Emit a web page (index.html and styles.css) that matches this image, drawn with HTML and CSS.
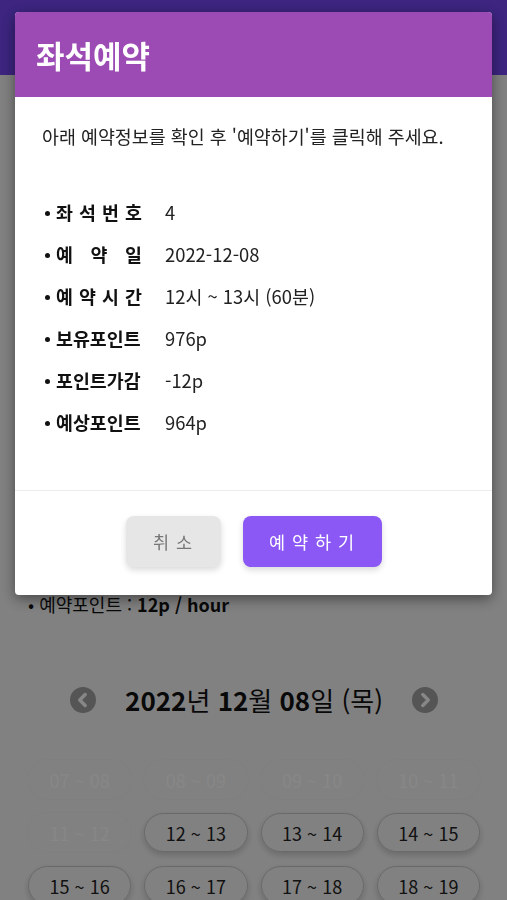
FILE: index.html
```html
<!DOCTYPE html>
<html lang="ko">
<head>
    <meta charset="UTF-8">
    <meta name="viewport" content="width=device-width, initial-scale=1.0">
    <title>좌석예약</title>
    <link rel="stylesheet" href="styles.css">
</head>
<body>
    <div class="app">
        <header class="app-bar"></header>
        <main class="content">
            <p class="point-info">• 예약포인트 : <b>12p / hour</b></p>

            <div class="date-nav">
                <span class="nav-btn">
                    <svg viewBox="0 0 24 24" width="26" height="26"><path d="M14 7l-5 5 5 5" /></svg>
                </span>
                <h2 class="date-title"><b>2022</b>년 <b>12</b>월 <b>08</b>일 (목)</h2>
                <span class="nav-btn">
                    <svg viewBox="0 0 24 24" width="26" height="26"><path d="M10 7l5 5-5 5" /></svg>
                </span>
            </div>

            <div class="slots">
                <span class="slot disabled">07 ~ 08</span>
                <span class="slot disabled">08 ~ 09</span>
                <span class="slot disabled">09 ~ 10</span>
                <span class="slot disabled">10 ~ 11</span>
                <span class="slot disabled">11 ~ 12</span>
                <span class="slot">12 ~ 13</span>
                <span class="slot">13 ~ 14</span>
                <span class="slot">14 ~ 15</span>
                <span class="slot">15 ~ 16</span>
                <span class="slot">16 ~ 17</span>
                <span class="slot">17 ~ 18</span>
                <span class="slot">18 ~ 19</span>
            </div>
        </main>
    </div>

    <div class="overlay">
        <div class="modal">
            <div class="modal-header">
                <h1>좌석예약</h1>
            </div>
            <div class="modal-body">
                <p class="intro">아래 예약정보를 확인 후 '예약하기'를 클릭해 주세요.</p>
                <ul class="info-list">
                    <li><span class="label">좌 석 번 호</span><span class="value">4</span></li>
                    <li><span class="label">예 약 일</span><span class="value">2022-12-08</span></li>
                    <li><span class="label">예 약 시 간</span><span class="value">12시 ~ 13시 (60분)</span></li>
                    <li><span class="label">보유포인트</span><span class="value">976p</span></li>
                    <li><span class="label">포인트가감</span><span class="value">-12p</span></li>
                    <li><span class="label">예상포인트</span><span class="value">964p</span></li>
                </ul>
            </div>
            <div class="modal-footer">
                <button class="btn btn-cancel">취 소</button>
                <button class="btn btn-confirm">예 약 하 기</button>
            </div>
        </div>
    </div>
</body>
</html>
```

FILE: styles.css
```css
body {
    margin: 0;
    font-family: "Noto Sans CJK KR", "Noto Sans", sans-serif;
    background-color: #f4f4f4;
    color: #111;
}
.app-bar {
    height: 75px;
    background-color: #7346f1;
}
.content {
    padding: 517px 27px 0 28px;
}
.point-info {
    margin: 0;
    font-size: 18px;
    line-height: 24px;
}
.date-nav {
    display: flex;
    align-items: center;
    justify-content: center;
    gap: 29px;
    height: 40px;
    margin-top: 64px;
}
.date-title {
    margin: 0;
    font-size: 26px;
    font-weight: normal;
    line-height: 40px;
}
.nav-btn {
    display: flex;
    width: 26px;
    height: 26px;
    border-radius: 50%;
    background-color: #a0a0a0;
}
.nav-btn path {
    fill: none;
    stroke: #fff;
    stroke-width: 3.2;
    stroke-linecap: round;
    stroke-linejoin: round;
}
.slots {
    display: grid;
    grid-template-columns: repeat(4, 1fr);
    column-gap: 13px;
    row-gap: 14px;
    margin-top: 40px;
}
.slot {
    display: flex;
    align-items: center;
    justify-content: center;
    height: 37px;
    border: 1px solid #c6c6c6;
    border-radius: 20px;
    font-size: 18px;
    color: #222;
    box-shadow: 0 3px 6px rgba(0,0,0,0.18);
}
.slot.disabled {
    border-color: transparent;
    color: #fff;
    box-shadow: 0 0 3px rgba(0,0,0,0.05);
}

.overlay {
    position: fixed;
    inset: 0;
    background-color: rgba(0,0,0,0.47);
    display: flex;
    justify-content: center;
    align-items: flex-start;
    padding-top: 12px;
}
.modal {
    width: 477px;
    background-color: #fff;
    border-radius: 4px;
    overflow: hidden;
    box-shadow: 0 4px 14px rgba(0,0,0,0.45);
}
.modal-header {
    height: 85px;
    display: flex;
    align-items: center;
    padding-left: 21px;
    background-color: #9c4bb5;
}
.modal-header h1 {
    margin: 0;
    color: #fff;
    font-size: 31px;
    font-weight: bold;
}
.modal-body {
    padding: 26px 27px 47px;
    border-bottom: 1px solid #ececec;
}
.intro {
    margin: 0;
    font-size: 18.4px;
    line-height: 26px;
    color: #222;
}
.info-list {
    list-style: none;
    margin: 42px 0 0;
    padding: 0;
}
.info-list li {
    display: flex;
    align-items: center;
    height: 42px;
    font-size: 18.4px;
}
.info-list li::before {
    content: "";
    width: 5px;
    height: 5px;
    border-radius: 50%;
    background-color: #111;
    margin: 2px 6px 0 3px;
}
.label {
    width: 86px;
    margin-right: 23px;
    font-weight: bold;
    white-space: nowrap;
    text-align: justify;
    text-align-last: justify;
    color: #111;
}
.value {
    color: #222;
}
.modal-footer {
    display: flex;
    justify-content: center;
    gap: 22px;
    padding: 25px 0 28px;
}
.btn {
    height: 51px;
    border: none;
    border-radius: 8px;
    font-family: inherit;
    font-size: 17.5px;
    letter-spacing: 1px;
    box-shadow: 0 3px 6px rgba(0,0,0,0.15);
}
.btn-cancel {
    width: 95px;
    background-color: #e6e6e6;
    color: #777;
}
.btn-confirm {
    width: 139px;
    background-color: #8b57f5;
    color: #fff;
}
```
